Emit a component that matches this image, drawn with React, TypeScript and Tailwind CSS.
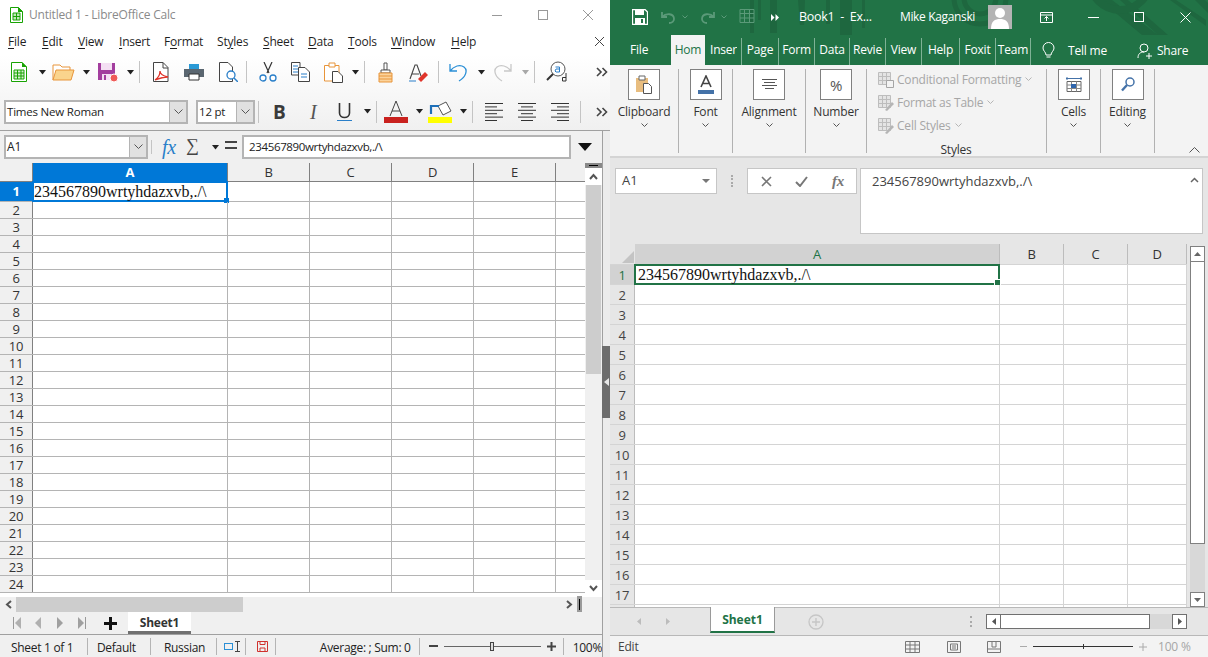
import React from "react";

const Dd = ({ c = "bg-[#222]", ml = "" }: { c?: string; ml?: string }) => (
  <svg width="7" height="5" viewBox="0 0 7 5" className={ml}><path d="M0 0h7L3.5 4.5z" fill={c === "dim" ? "#a8a8a8" : "#222"} /></svg>
);
const Sep = ({ ml }: { ml: string }) => <div className={`w-px h-[22px] bg-[#c4c4c4] ${ml}`} />;
const More = ({ ml }: { ml: string }) => (
  <svg width="12" height="10" viewBox="0 0 12 10" className={ml}><path d="M1 1l4 4-4 4M6.500 1l4 4-4 4" fill="none" stroke="#444" strokeWidth="1.600" /></svg>
);
const U = ({ children }: { children: React.ReactNode }) => <span className="underline underline-offset-2 decoration-1">{children}</span>;

const leftMenu: [React.ReactNode, string][] = [
  [<><U>F</U>ile</>, "w-[34px]"],
  [<><U>E</U>dit</>, "w-[36px]"],
  [<><U>V</U>iew</>, "w-[41px]"],
  [<><U>I</U>nsert</>, "w-[45px]"],
  [<>F<U>o</U>rmat</>, "w-[53px]"],
  [<>St<U>y</U>les</>, "w-[46px]"],
  [<><U>S</U>heet</>, "w-[45px]"],
  [<><U>D</U>ata</>, "w-[40px]"],
  [<><U>T</U>ools</>, "w-[43px]"],
  [<><U>W</U>indow</>, "w-[60px]"],
  [<><U>H</U>elp</>, "w-[40px]"],
];

function AlignIcon({ kind, ml }: { kind: "l" | "c" | "r"; ml: string }) {
  const rows = [18, 12, 18, 12, 18, 12];
  return (
    <svg width="18" height="20" viewBox="0 0 18 20" className={ml}>
      {rows.map((w, i) => {
        const x = kind === "l" ? 0 : kind === "r" ? 18 - w : (18 - w) / 2;
        return <rect key={i} x={x} y={1 + i * 3.4} width={w} height="1" fill="#333" />;
      })}
    </svg>
  );
}

function Toolbar1() {
  return (
    <div className="flex items-center h-[28px] mt-[3px] pl-[11px]">
      <svg width="16" height="20" viewBox="0 0 16 20"><path d="M.5 .5H11L15.500 5V19.500H.5z" fill="#fff" stroke="#18a303" /><path d="M11 0v5h5z" fill="#18a303" /><path d="M3 8h10v9H3z" fill="#d6efd0" stroke="#18a303" /><path d="M3 11h10M3 14h10M6.500 8v9M10 8v9" stroke="#18a303" /></svg>
      <Dd ml="ml-[12px]" />
      <svg width="23" height="18" viewBox="0 0 23 18" className="ml-[6px]"><path d="M1 17V2h7l2 2h8v3" fill="#fff" stroke="#e8953a" /><path d="M1 17L4 7h18l-3 10z" fill="#fad48d" stroke="#e8953a" /></svg>
      <Dd ml="ml-[8px]" />
      <svg width="21" height="20" viewBox="0 0 21 20" className="ml-[7px]"><path d="M1 1h17v17H1z" fill="#a33e9e" /><path d="M4 1h11v7H4z" fill="#f4dff3" /><path d="M5 12h9v6H5z" fill="#f4dff3" /><path d="M7 13h2v5H7z" fill="#a33e9e" /><circle cx="17" cy="16" r="4" fill="#ef5b58" stroke="#fff" /></svg>
      <Dd ml="ml-[9px]" />
      <Sep ml="ml-[5px]" />
      <svg width="16" height="20" viewBox="0 0 16 20" className="ml-[13px]"><path d="M.5 .5H10L15 5.500V19.500H.5z" fill="#fff" stroke="#444" /><path d="M10 .5V6h5" fill="none" stroke="#444" /><path d="M2 18c3-2 5-6 5-9 0 3 3 5 8 6-4 0-8 1-13 3z" fill="none" stroke="#e0352b" strokeWidth="1.300" /></svg>
      <svg width="20" height="18" viewBox="0 0 20 18" className="ml-[15px]"><path d="M5 1h10v5H5z" fill="#2a9ad6" /><path d="M0 6h20v8H0z" fill="#5a6670" /><path d="M5 11h10v6H5z" fill="#fff" stroke="#333" /></svg>
      <svg width="19" height="20" viewBox="0 0 19 20" className="ml-[15px]"><path d="M.5 .5H9L13.500 5V19.500H.5z" fill="#fff" stroke="#444" /><circle cx="12" cy="13" r="4" fill="#fff" stroke="#2a7fc9" strokeWidth="1.300" /><path d="M15 16l4 4" stroke="#2a7fc9" strokeWidth="1.500" /></svg>
      <Sep ml="ml-[8px]" />
      <svg width="18" height="20" viewBox="0 0 18 20" className="ml-[12px]"><path d="M5 0l5 11M13 0L8 11" stroke="#333" strokeWidth="1.200" /><circle cx="4" cy="16" r="3" fill="#fff" stroke="#2a7fc9" strokeWidth="1.300" /><circle cx="14" cy="16" r="3" fill="#fff" stroke="#2a7fc9" strokeWidth="1.300" /></svg>
      <svg width="19" height="20" viewBox="0 0 19 20" className="ml-[14px]"><path d="M.5 .5H9V13H.5z" fill="#fff" stroke="#444" /><path d="M2 4h5M2 7h5M2 10h5" stroke="#2a7fc9" /><path d="M7.500 5.500H14L18.500 10V19.500H7.500z" fill="#fff" stroke="#444" /><path d="M10 12h6M10 15h6" stroke="#2a7fc9" /></svg>
      <svg width="19" height="21" viewBox="0 0 19 21" className="ml-[14px]"><path d="M.5 3.500H15V19H.5z" fill="#fff" stroke="#e8953a" /><path d="M5 1h6v4H5z" fill="#fff" stroke="#e8953a" /><path d="M8.500 9.500H14L18.500 14V20.500H8.500z" fill="#fff" stroke="#444" /></svg>
      <Dd ml="ml-[9px]" />
      <Sep ml="ml-[5px]" />
      <svg width="15" height="21" viewBox="0 0 15 21" className="ml-[13px]"><path d="M6 1h3v7H6z" fill="#fff" stroke="#555" /><path d="M3 8h9v3H3z" fill="#fff" stroke="#555" /><path d="M1 11h13v9H1z" fill="#fbd39c" stroke="#e8953a" /><path d="M1 14h13M1 17h13" stroke="#e8953a" /></svg>
      <svg width="19" height="21" viewBox="0 0 19 21" className="ml-[16px]"><path d="M1 17L6 3h2l4 11M3 12h7" fill="none" stroke="#444" strokeWidth="1.100" /><path d="M0 19h7" stroke="#2a7fc9" /><path d="M9 17l7-7 3 3-7 7z" fill="#e0352b" /></svg>
      <Sep ml="ml-[10px]" />
      <svg width="18" height="19" viewBox="0 0 18 19" className="ml-[10px]"><path d="M1 1v7h7M1 8c4-5 10-7 14-4 4 3 2 10-5 14" fill="none" stroke="#2a8fd6" strokeWidth="1.300" /></svg>
      <Dd ml="ml-[11px]" />
      <svg width="19" height="19" viewBox="0 0 19 19" className="ml-[8px]"><path d="M18 1v7h-7M18 8c-4-5-10-7-14-4-4 3-2 10 5 14" fill="none" stroke="#c8c8c8" strokeWidth="1.300" /></svg>
      <Dd c="dim" ml="ml-[10px]" />
      <Sep ml="ml-[5px]" />
      <svg width="22" height="22" viewBox="0 0 22 22" className="ml-[11px]"><circle cx="12" cy="8" r="7" fill="#fff" stroke="#555" /><path d="M7 13l-6 6" stroke="#333" strokeWidth="2" /><path d="M9.500 6h4v5h-3.500l-1-1 1-2h3.500" fill="none" stroke="#2a7fc9" /><path d="M20 12v8h-3.500v-3.500H20" fill="none" stroke="#333" /></svg>
      <More ml="ml-[28px]" />
    </div>
  );
}

function Combo({ label, w, arrow }: { label: string; w: string; arrow: string }) {
  return (
    <div className={`flex h-[24px] border-2 border-[#b4b4b4] bg-white ${w}`}>
      <span className="flex-1 pl-[1px] text-[11.5px] leading-[20px] text-[#222] truncate">{label}</span>
      <span className={`flex items-center justify-center bg-[#e1e1e1] border-l border-[#b4b4b4] ${arrow}`}>
        <svg width="9" height="6" viewBox="0 0 9 6"><path d="M.5 .5l4 4 4-4" fill="none" stroke="#555" /></svg>
      </span>
    </div>
  );
}

function Toolbar2() {
  return (
    <div className="flex items-center h-[27px] mt-[12px] pl-[4px]">
      <Combo label="Times New Roman" w="w-[184px]" arrow="w-[17px]" />
      <div className="ml-[8px]"><Combo label="12 pt" w="w-[59px]" arrow="w-[17px]" /></div>
      <Sep ml="ml-[3px]" />
      <span className="ml-[14px] w-[12px] text-[19px] leading-[24px] font-bold text-[#3a3a3a]">B</span>
      <span className="ml-[25px] w-[7px] text-[20px] leading-[24px] italic text-[#555] font-['Liberation_Serif',serif]">I</span>
      <div className="ml-[20px] w-[15px] h-[20px] flex flex-col items-center">
        <svg width="15" height="20" viewBox="0 0 15 20"><path d="M2.500 1v10c0 6 10 6 10 0V1" fill="none" stroke="#333" strokeWidth="1.600" /><path d="M0 18.500h15" stroke="#2a7fc9" /></svg>
      </div>
      <Dd ml="ml-[12px]" />
      <Sep ml="ml-[5px]" />
      <svg width="24" height="23" viewBox="0 0 24 23" className="ml-[7px]"><path d="M6 16L12 1l6 15M8 11h8" fill="none" stroke="#444" /><rect y="17" width="24" height="6" fill="#c9211e" /></svg>
      <Dd ml="ml-[8px]" />
      <svg width="24" height="23" viewBox="0 0 24 23" className="ml-[5px]"><path d="M10 6l8-4 5 9-8 4z" fill="#fff" stroke="#555" /><path d="M3 14V6h8" fill="none" stroke="#1e6fb8" strokeWidth="2.200" /><rect y="17" width="24" height="6" fill="#ffff00" /></svg>
      <Dd ml="ml-[8px]" />
      <Sep ml="ml-[5px]" />
      <AlignIcon kind="l" ml="ml-[12px]" />
      <AlignIcon kind="c" ml="ml-[15px]" />
      <AlignIcon kind="r" ml="ml-[15px]" />
      <Sep ml="ml-[11px]" />
      <More ml="ml-[15px]" />
    </div>
  );
}

function LeftFormula() {
  return (
    <div className="flex items-center h-[32px] pl-[4px] bg-[#f0f0f0]">
      <div className="flex w-[144px] h-[24px] border-2 border-[#b4b4b4] bg-white">
        <span className="flex-1 pl-[1px] text-[12px] leading-[20px] text-[#222]">A1</span>
        <span className="flex items-center justify-center w-[17px] bg-[#e1e1e1] border-l border-[#b4b4b4]">
          <svg width="9" height="6" viewBox="0 0 9 6"><path d="M.5 .5l4 4 4-4" fill="none" stroke="#555" /></svg>
        </span>
      </div>
      <div className="w-px h-[14px] bg-[#c4c4c4] ml-[3px]" />
      <span className="ml-[10px] w-[16px] text-[20px] leading-[24px] italic text-[#2a7fc9] font-['Liberation_Serif',serif]">fx</span>
      <span className="ml-[8px] w-[13px] text-[18px] leading-[22px] text-[#444] font-['Liberation_Serif',serif] -mt-[4px]">∑</span>
      <Dd ml="ml-[13px]" />
      <svg width="12" height="9" viewBox="0 0 12 9" className="ml-[6px] -mt-[4px]"><rect width="12" height="2" fill="#444" /><rect y="6" width="12" height="2" fill="#444" /></svg>
      <div className="ml-[5px] w-[329px] h-[24px] border-2 border-[#b4b4b4] bg-white pl-[5px] text-[11.5px] tracking-[-0.35px] leading-[20px] text-[#222]">234567890wrtyhdazxvb,./\</div>
      <svg width="14" height="8" viewBox="0 0 14 8" className="ml-[7px]"><path d="M0 0h14L7 8z" fill="#111" /></svg>
    </div>
  );
}

const lcols = ["w-[195px]", "w-[82px]", "w-[82px]", "w-[82px]", "w-[82px]"];
const lnames = ["A", "B", "C", "D", "E"];

function LeftGrid() {
  return (
    <div className="w-[585px] h-[434px] bg-white overflow-hidden">
      <div className="flex h-[19px] bg-[#f0f0f0] border-b border-[#808080] text-[13px] leading-[18px] text-[#333]">
        <div className="w-[33px] border-r border-[#808080]" />
        {lnames.map((n, i) => (
          <div key={n} className={`${lcols[i]} text-center border-r border-[#808080] ${i === 0 ? "bg-[#0078d7] text-white font-bold" : ""}`}>{n}</div>
        ))}
      </div>
      {Array.from({ length: 24 }, (_, r) => (
        <div key={r} className={`flex border-b border-[#b4b4b4] ${r === 0 ? "h-[20px]" : "h-[17px]"}`}>
          <div className={`w-[33px] text-center text-[13px] leading-[16px] border-r border-[#808080] ${r === 0 ? "bg-[#0078d7] text-white font-bold leading-[19px]" : "bg-[#f0f0f0] text-[#333]"}`}>{r + 1}</div>
          {lcols.map((w, i) => (
            <div key={i} className={`${w} border-r border-[#b4b4b4] relative`}>
              {r === 0 && i === 0 && (
                <div className="absolute -top-px -left-px -right-px -bottom-px border-2 border-[#0078d7] font-['Liberation_Serif',serif] text-[16px] tracking-normal leading-[18px] text-[#111] whitespace-nowrap">
                  234567890wrtyhdazxvb,./\
                  <div className="absolute -right-[3px] -bottom-[3px] w-[5px] h-[5px] bg-[#0078d7]" />
                </div>
              )}
            </div>
          ))}
        </div>
      ))}
    </div>
  );
}

function LeftVScroll() {
  return (
    <div className="w-[17px] h-[434px] bg-[#f0f0f0] flex flex-col">
      <div className="h-[5px] bg-[#888] flex items-center justify-center"><div className="w-[9px] h-px bg-black" /></div>
      <div className="h-[17px] bg-white flex items-center justify-center">
        <svg width="9" height="7" viewBox="0 0 9 7"><path d="M1 6l3.500-4L8 6" fill="none" stroke="#555" strokeWidth="2" /></svg>
      </div>
      <div className="h-[189px] bg-[#cdcdcd] mx-px" />
      <div className="mt-auto h-[17px] bg-white flex items-center justify-center">
        <svg width="9" height="7" viewBox="0 0 9 7"><path d="M1 1l3.500 4L8 1" fill="none" stroke="#555" strokeWidth="2" /></svg>
      </div>
    </div>
  );
}

function LeftHScroll() {
  return (
    <div className="flex items-center h-[15px] bg-[#f0f0f0]">
      <div className="w-[16px] flex justify-center">
        <svg width="7" height="9" viewBox="0 0 7 9"><path d="M6 1L2 4.500 6 8" fill="none" stroke="#555" strokeWidth="2" /></svg>
      </div>
      <div className="w-[227px] h-[15px] bg-[#cdcdcd]" />
      <svg width="7" height="9" viewBox="0 0 7 9" className="ml-[323px]"><path d="M1 1l4 3.500L1 8" fill="none" stroke="#555" strokeWidth="2" /></svg>
      <div className="ml-[4px] w-[5px] h-[17px] bg-[#9a9a9a] flex items-center justify-center"><div className="w-px h-[11px] bg-black" /></div>
    </div>
  );
}

function LeftTabs() {
  return (
    <div className="flex items-center h-[23px] bg-[#f0f0f0] border-b border-[#a0a0a0] pl-[13px]">
      <svg width="8" height="12" viewBox="0 0 8 12"><rect width="1" height="12" fill="#999" /><path d="M8 0v12L2 6z" fill="#b0b0b0" /></svg>
      <svg width="6" height="12" viewBox="0 0 6 12" className="ml-[14px]"><path d="M6 0v12L0 6z" fill="#b0b0b0" /></svg>
      <svg width="6" height="12" viewBox="0 0 6 12" className="ml-[16px]"><path d="M0 0v12l6-6z" fill="#a0a0a0" /></svg>
      <svg width="8" height="12" viewBox="0 0 8 12" className="ml-[15px]"><path d="M0 0v12l6-6z" fill="#a0a0a0" /><rect x="7" width="1" height="12" fill="#999" /></svg>
      <svg width="13" height="13" viewBox="0 0 13 13" className="ml-[18px]"><rect y="5" width="13" height="3" fill="#111" /><rect x="5" width="3" height="13" fill="#111" /></svg>
      <div className="ml-[11px] w-[63px] h-[22px] bg-white border-b-[3px] border-[#707070] text-center text-[12px] leading-[21px] font-bold text-[#333]">Sheet1</div>
    </div>
  );
}

function LeftStatus() {
  const cell = "h-[17px] border-r border-[#b4b4b4] text-[12px] leading-[19px] tracking-[-0.3px] text-[#222]";
  return (
    <div className="flex items-center h-[22px] bg-[#f0f0f0]">
      <div className={`${cell} w-[88px] pl-[11px]`}>Sheet 1 of 1</div>
      <div className={`${cell} w-[63px] pl-[9px]`}>Default</div>
      <div className={`${cell} w-[66px] pl-[13px]`}>Russian</div>
      <div className={`${cell} w-[29px] flex items-center pl-[7px]`}>
        <svg width="17" height="11" viewBox="0 0 17 11"><rect x=".5" y="2.500" width="8" height="6" fill="none" stroke="#2a8fd6" /><path d="M11 .5h5M13.500 .5v10M11 10.500h5" stroke="#444" fill="none" /></svg>
      </div>
      <div className={`${cell} w-[30px] flex items-center pl-[11px]`}>
        <svg width="11" height="11" viewBox="0 0 11 11"><path d="M.5 .5h10v10H.5z" fill="none" stroke="#d0312d" /><path d="M3 .5h5v3H3zM3 10.500V7h5v3.500" fill="none" stroke="#d0312d" /></svg>
      </div>
      <div className={`${cell} w-[144px] pl-[44px]`}>Average: ; Sum: 0</div>
      <div className={`${cell} w-[144px] flex items-center pl-[9px]`}>
        <div className="w-[9px] h-[2px] bg-[#444]" />
        <div className="relative ml-[6px] w-[97px] h-px bg-[#666]">
          <div className="absolute left-[46px] -top-[4px] w-[4px] h-[9px] bg-[#ddd] border border-[#444]" />
        </div>
        <svg width="9" height="9" viewBox="0 0 9 9" className="ml-[6px]"><path d="M0 4.500h9M4.500 0v9" stroke="#444" strokeWidth="2" /></svg>
      </div>
      <div className="pl-[9px] text-[12px] leading-[19px] h-[17px] tracking-[-0.3px] text-[#222]">100%</div>
    </div>
  );
}

function LibreOffice() {
  return (
    <div className="w-[610px] h-[657px] flex flex-col bg-white">
      <div className="flex items-center h-[30px] pl-[10px]">
        <svg width="13" height="16" viewBox="0 0 13 16"><path d="M.5 .5H8.500L12.500 4.500V15.500H.5z" fill="#fff" stroke="#18a303" /><path d="M8 0v5h5z" fill="#18a303" /><path d="M3 6h7v7H3z" fill="#bfe8b8" stroke="#18a303" /><path d="M3 9.500h7M6.500 6v7" stroke="#18a303" /></svg>
        <span className="ml-[6px] text-[12px] text-[#8a8a8a]">Untitled 1 - LibreOffice Calc</span>
        <div className="ml-auto flex items-center">
          <div className="w-[10px] h-px bg-[#999]" />
          <div className="ml-[36px] w-[10px] h-[10px] border border-[#999]" />
          <svg width="10" height="10" viewBox="0 0 10 10" className="ml-[35px] mr-[17px]"><path d="M0 0l10 10M10 0L0 10" stroke="#999" /></svg>
        </div>
      </div>
      <div className="flex items-center h-[23px] mb-[2px] pl-[8px] text-[12px] text-[#1f1f1f]">
        {leftMenu.map(([t, w], i) => <div key={i} className={w}>{t}</div>)}
        <svg width="9" height="9" viewBox="0 0 9 9" className="ml-auto mr-[6px]"><path d="M0 0l9 9M9 0L0 9" stroke="#444" /></svg>
      </div>
      <div className="bg-gradient-to-b from-white to-[#f0f0f0] h-[75px] border-b border-[#a0a0a0] box-content">
        <Toolbar1 />
        <Toolbar2 />
      </div>
      <div className="flex flex-1 min-h-0">
        <div className="w-[602px] flex flex-col">
          <LeftFormula />
          <div className="flex"><LeftGrid /><LeftVScroll /></div>
          <LeftHScroll />
          <LeftTabs />
          <LeftStatus />
        </div>
        <div className="w-[8px] bg-[#ececec] border-l border-[#a0a0a0]">
          <div className="mt-[215px] -ml-px h-[72px] bg-[#6d6d6d] flex items-center justify-center">
            <svg width="5" height="8" viewBox="0 0 5 8"><path d="M5 0v8L0 4z" fill="#e8e8e8" /></svg>
          </div>
        </div>
      </div>
    </div>
  );
}

const xlTabs: [string, string][] = [
  ["Page", "w-[37px]"], ["Form", "w-[36px]"], ["Data", "w-[35px]"], ["Revie", "w-[36px]"], ["View", "w-[36px]"], ["Help", "w-[38px]"], ["Foxit", "w-[36px]"], ["Team", "w-[35px]"],
];

function RibbonBtn({ children }: { children: React.ReactNode }) {
  return <div className="w-[32px] h-[31px] bg-white border border-[#808080] flex items-center justify-center">{children}</div>;
}
const Chev = ({ c = "#555" }: { c?: string }) => (
  <svg width="7" height="5" viewBox="0 0 7 5"><path d="M.5 .5l3 3 3-3" fill="none" stroke={c} /></svg>
);

function Group({ w, label, children }: { w: string; label: string; children: React.ReactNode }) {
  return (
    <div className={`${w} h-[84px] mt-[4px] border-r border-[#b1b1b1] flex flex-col items-center`}>
      <RibbonBtn>{children}</RibbonBtn>
      <div className="mt-[4px] text-[12px] leading-[16px] text-[#333]">{label}</div>
      <div className="mt-[3px]"><Chev /></div>
    </div>
  );
}

function StyleRow({ label, kind }: { label: string; kind: number }) {
  return (
    <div className="flex items-center h-[23px]">
      <svg width="16" height="16" viewBox="0 0 16 16">
        <path d="M.5 .5h12v12H.5z" fill="#e4e4e4" stroke="#bdbdbd" />
        <path d="M4.500 .5v12M8.500 .5v12M.5 4.500h12M.5 8.500h12" stroke="#bdbdbd" />
        {kind === 0 ? <path d="M8.500 8.500h7v7h-7z" fill="#f3f3f3" stroke="#a5a5a5" /> : <path d="M7 15l7-8 2 2-7 7z" fill="#b5b5b5" />}
      </svg>
      <span className="ml-[3px] text-[12px] text-[#a6a6a6] whitespace-nowrap">{label}</span>
      <span className="ml-[4px]"><Chev c="#b5b5b5" /></span>
    </div>
  );
}

function Ribbon() {
  return (
    <div className="flex h-[93px] bg-[#f3f3f3] border-b-2 border-[#d4d4d4]">
      <Group w="w-[69px]" label="Clipboard">
        <svg width="16" height="19" viewBox="0 0 16 19"><path d="M0 3h12v14H0z" fill="#e8bd7f" /><path d="M3 1h6v4H3z" fill="#fff" stroke="#666" /><path d="M7.500 8.500h5l3 3v7h-8z" fill="#fff" stroke="#555" /></svg>
      </Group>
      <Group w="w-[54px]" label="Font">
        <svg width="16" height="19" viewBox="0 0 16 19"><path d="M3 12L8 1l5 11M5 8.500h6" fill="none" stroke="#444" strokeWidth="1.600" /><rect y="15" width="16" height="4" fill="#4472a8" /></svg>
      </Group>
      <Group w="w-[73px]" label="Alignment">
        <svg width="15" height="11" viewBox="0 0 15 11"><path d="M0 .5h15M2 3.500h11M0 6.500h15M3 9.500h9" stroke="#555" /></svg>
      </Group>
      <Group w="w-[61px]" label="Number">
        <span className="text-[15px] leading-[18px] text-[#555]">%</span>
      </Group>
      <div className="w-[180px] h-[84px] mt-[4px] border-r border-[#b1b1b1] flex flex-col pl-[11px]">
        <div className="-mt-px">
          <StyleRow label="Conditional Formatting" kind={0} />
          <StyleRow label="Format as Table" kind={1} />
          <StyleRow label="Cell Styles" kind={1} />
        </div>
        <div className="mt-[5px] pr-[12px] text-center text-[12px] leading-[16px] text-[#333]">Styles</div>
      </div>
      <Group w="w-[54px]" label="Cells">
        <svg width="16" height="16" viewBox="0 0 16 16"><path d="M0 1.500h16M1 0v3M15 0v3" stroke="#4472a8" /><path d="M1 4.500h14v10H1z" fill="#fff" stroke="#666" /><path d="M5.500 4.500v10M10.500 4.500v10M1 8h14M1 11.500h14" stroke="#888" /><rect x="5" y="7" width="5" height="4" fill="#2f65ac" /></svg>
      </Group>
      <Group w="w-[54px]" label="Editing">
        <svg width="14" height="15" viewBox="0 0 14 15"><circle cx="9" cy="5" r="4" fill="#fff" stroke="#4472a8" strokeWidth="1.500" /><path d="M6 8l-5 5.500" stroke="#4472a8" strokeWidth="2.400" /></svg>
      </Group>
      <div className="flex-1 flex items-end justify-end pr-[8px] pb-[3px]">
        <svg width="11" height="6" viewBox="0 0 11 6"><path d="M.5 5.500l5-5 5 5" fill="none" stroke="#555" /></svg>
      </div>
    </div>
  );
}

function XlFormula() {
  return (
    <div className="flex h-[86px] bg-[#e6e6e6] pt-[10px] pl-[5px]">
      <div className="flex items-center w-[102px] h-[26px] bg-white border border-[#c6c6c6] pl-[6px] text-[13px] tracking-normal text-[#444]">
        A1
        <svg width="8" height="5" viewBox="0 0 8 5" className="ml-auto mr-[6px]"><path d="M0 0h8L4 4z" fill="#777" /></svg>
      </div>
      <div className="ml-[14px] w-[2px] h-[12px] mt-[7px] border-l-2 border-dotted border-[#aaa]" />
      <div className="ml-[14px] flex items-center w-[110px] h-[26px] bg-white border border-[#c6c6c6]">
        <svg width="11" height="11" viewBox="0 0 11 11" className="ml-[13px]"><path d="M1 1l9 9M10 1l-9 9" stroke="#777" strokeWidth="1.600" /></svg>
        <svg width="13" height="11" viewBox="0 0 13 11" className="ml-[23px]"><path d="M1 6l4 4 7-9" fill="none" stroke="#777" strokeWidth="2" /></svg>
        <span className="ml-[24px] text-[15px] font-bold italic font-['Liberation_Serif',serif] text-[#777]">fx</span>
      </div>
      <div className="ml-[3px] w-[343px] h-[66px] bg-white border border-[#c6c6c6] pl-[11px] pt-[3px] text-[13px] tracking-normal leading-[19px] text-[#444] flex justify-between">
        234567890wrtyhdazxvb,./\
        <svg width="9" height="6" viewBox="0 0 9 6" className="mt-[5px] mr-[3px]"><path d="M1 5l3.500-3.500L8 5" fill="none" stroke="#666" strokeWidth="1.500" /></svg>
      </div>
    </div>
  );
}

const xcols = ["w-[365px]", "w-[64px]", "w-[64px]", "w-[59px]"];
const xnames = ["A", "B", "C", "D"];

function XlGrid() {
  return (
    <div className="w-[577px] h-[363px] bg-white overflow-hidden">
      <div className="flex h-[20px] bg-[#e6e6e6] text-[13px] leading-[20px] text-[#333]">
        <div className="w-[25px] flex items-end justify-end pr-[1px] pb-[1px]">
          <svg width="12" height="12" viewBox="0 0 12 12"><path d="M12 0v12H0z" fill="#c4c4c4" /></svg>
        </div>
        {xnames.map((n, i) => (
          <div key={n} className={`${xcols[i]} text-center border-r border-[#bcbcbc] ${i === 0 ? "bg-[#d2d2d2] text-[#217346]" : ""}`}>{n}</div>
        ))}
      </div>
      {Array.from({ length: 18 }, (_, r) => (
        <div key={r} className={`flex border-b border-[#d4d4d4] ${r === 0 ? "h-[21px] border-t" : "h-[20px]"}`}>
          <div className={`w-[25px] text-center text-[13px] leading-[21px] border-r border-[#bcbcbc] ${r === 0 ? "bg-[#d2d2d2] text-[#217346]" : "bg-[#e6e6e6] text-[#444]"}`}>{r < 17 ? r + 1 : ""}</div>
          {xcols.map((w, i) => (
            <div key={i} className={`${w} border-r border-[#d4d4d4] relative`}>
              {r === 0 && i === 0 && (
                <div className="absolute -top-px -left-px right-[-1px] -bottom-px border-2 border-[#217346] pl-[2px] font-['Liberation_Serif',serif] text-[16px] tracking-normal leading-[18px] text-[#111] whitespace-nowrap">
                  234567890wrtyhdazxvb,./\
                  <div className="absolute -right-[3px] -bottom-[3px] w-[5px] h-[5px] bg-[#217346] border border-white box-content" />
                </div>
              )}
            </div>
          ))}
        </div>
      ))}
    </div>
  );
}

function XlVScroll() {
  return (
    <div className="w-[15px] ml-[3px] h-[361px] mt-[2px] bg-[#d8d8d8] flex flex-col">
      <div className="h-[16px] bg-white border border-[#808080] flex items-center justify-center">
        <svg width="7" height="4" viewBox="0 0 7 4"><path d="M3.500 0L7 4H0z" fill="#666" /></svg>
      </div>
      <div className="h-[282px] bg-white border border-t-0 border-[#808080]" />
      <div className="mt-auto h-[15px] bg-white border border-[#808080] flex items-center justify-center">
        <svg width="7" height="4" viewBox="0 0 7 4"><path d="M0 0h7L3.500 4z" fill="#666" /></svg>
      </div>
    </div>
  );
}

function XlTabs() {
  return (
    <div className="flex items-center h-[29px] bg-[#e6e6e6] border-t border-b border-[#b8b8b8] pl-[27px]">
      <svg width="4" height="7" viewBox="0 0 4 7"><path d="M4 0v7L0 3.500z" fill="#bcbcbc" /></svg>
      <svg width="4" height="7" viewBox="0 0 4 7" className="ml-[25px]"><path d="M0 0v7l4-3.500z" fill="#bcbcbc" /></svg>
      <div className="ml-[40px] w-[65px] h-[26px] -mt-px self-start bg-white border-x border-b-[2px] border-[#9a9a9a] border-b-[#217346] text-center text-[12px] tracking-normal font-bold leading-[25px] text-[#217346]">Sheet1</div>
      <svg width="16" height="16" viewBox="0 0 16 16" className="ml-[33px]"><circle cx="8" cy="8" r="7" fill="none" stroke="#c6c6c6" strokeWidth="1.300" /><path d="M4 8h8M8 4v8" stroke="#c6c6c6" strokeWidth="1.400" /></svg>
      <div className="ml-[146px] w-[2px] h-[11px] border-l-2 border-dotted border-[#aaa]" />
      <div className="ml-[14px] flex w-[201px] h-[15px] bg-[#d8d8d8]">
        <div className="w-[15px] bg-white border border-[#707070] flex items-center justify-center">
          <svg width="4" height="7" viewBox="0 0 4 7"><path d="M4 0v7L0 3.500z" fill="#555" /></svg>
        </div>
        <div className="w-[149px] bg-white border-y border-r border-[#707070]" />
        <div className="ml-auto w-[15px] bg-white border border-[#707070] flex items-center justify-center">
          <svg width="4" height="7" viewBox="0 0 4 7"><path d="M0 0v7l4-3.500z" fill="#555" /></svg>
        </div>
      </div>
    </div>
  );
}

function XlStatus() {
  return (
    <div className="flex items-center h-[21px] bg-[#f3f3f3] pl-[8px] text-[12px] text-[#444]">
      <span className="w-[23px]">Edit</span>
      <svg width="15" height="12" viewBox="0 0 15 12" className="ml-[264px]"><path d="M.5 .5h14v11H.5zM5 .5v11M10 .5v11M.5 4h14M.5 8h14" fill="none" stroke="#777" /></svg>
      <svg width="14" height="12" viewBox="0 0 14 12" className="ml-[27px]"><path d="M.5 .5h13v11H.5z" fill="none" stroke="#777" /><path d="M3.500 3h7v6h-7zM5 5h4M5 7h4" fill="none" stroke="#777" /></svg>
      <svg width="14" height="12" viewBox="0 0 14 12" className="ml-[26px]"><path d="M.5 .5h13v11H.5zM5 .5V6h4V.5M.5 8h13" fill="none" stroke="#777" /></svg>
      <div className="ml-[19px] w-[7px] h-px bg-[#aaa]" />
      <div className="relative ml-[6px] w-[100px] h-px bg-[#333]">
        <div className="absolute left-[50px] -top-[2px] w-px h-[5px] bg-[#333]" />
      </div>
      <svg width="8" height="8" viewBox="0 0 8 8" className="ml-[6px]"><path d="M0 4h8M4 0v8" stroke="#aaa" /></svg>
      <span className="ml-[11px] text-[#a6a6a6] whitespace-nowrap">100 %</span>
    </div>
  );
}

function Excel() {
  return (
    <div className="w-[598px] h-[657px] flex flex-col bg-[#e6e6e6]">
      <div className="relative h-[65px] bg-[#217346] text-white text-[12px]">
        <svg width="598" height="65" viewBox="0 0 598 65" className="absolute inset-0 pointer-events-none">
          <g fill="#1e673f">
            <rect x="140" y="0" width="4" height="33" /><rect x="148" y="0" width="3" height="20" /><rect x="160" y="0" width="7" height="33" /><path d="M188 0h7l-1 25h-4z" /><rect x="230" y="0" width="12" height="35" /><rect x="252" y="0" width="3" height="28" /><rect x="216" y="0" width="4" height="24" />
            <path d="M490 0h12l46 35h-16zM510 0h8l40 35h-10zM560 0h6l30 20v6zM585 0h10l3 3v10z" />
          </g>
          <g fill="none" stroke="#1e673f" strokeWidth="5">
            <circle cx="370" cy="-2" r="26" /><circle cx="370" cy="-2" r="16" /><circle cx="510" cy="-20" r="30" strokeWidth="8" />
          </g>
        </svg>
        <div className="relative flex items-center h-[34px] mb-px">
          <svg width="16" height="16" viewBox="0 0 16 16" className="ml-[22px]"><path d="M.5 .5H13L15.500 3V15.500H.5z" fill="none" stroke="#fff" strokeWidth="1.300" /><rect x="3" y="1" width="9" height="5" fill="#fff" /><rect x="3" y="9" width="10" height="6" fill="#fff" /><rect x="9" y="10" width="2" height="4" fill="#217346" /></svg>
          <svg width="15" height="13" viewBox="0 0 15 13" className="ml-[13px]"><path d="M1 1v5h5M1 6c4-4 12-4 12 2 0 2-2 4-5 4" fill="none" stroke="#5b9a79" strokeWidth="1.800" /></svg>
          <svg width="6" height="4" viewBox="0 0 6 4" className="ml-[6px]"><path d="M.5 .5L3 3 5.500 .5" fill="none" stroke="#5b9a79" /></svg>
          <svg width="15" height="13" viewBox="0 0 15 13" className="ml-[12px]"><path d="M14 1v5H9M14 6c-4-4-12-4-12 2 0 2 2 4 5 4" fill="none" stroke="#5b9a79" strokeWidth="1.800" /></svg>
          <svg width="6" height="4" viewBox="0 0 6 4" className="ml-[6px]"><path d="M.5 .5L3 3 5.500 .5" fill="none" stroke="#5b9a79" /></svg>
          <svg width="16" height="16" viewBox="0 0 16 16" className="ml-[12px]"><path d="M1 .5h14v13H1zM1 4.500h14M5.500 .5v13M10.500 .5v13M1 9h14" fill="none" stroke="#5b9a79" /></svg>
          <svg width="8" height="7" viewBox="0 0 8 7" className="ml-[16px]"><path d="M0 0l3.500 3.500L0 7zM4.500 0L8 3.500 4.500 7z" fill="#fff" /></svg>
          <span className="ml-[20px] w-[101px] whitespace-pre text-[12.5px] tracking-[-0.3px]">Book1  -  Ex...</span>
          <span className="w-[77px] whitespace-nowrap text-[12px] tracking-[-0.35px]">Mike Kaganski</span>
          <div className="ml-[11px] w-[24px] h-[24px] bg-[#b4b4b4] overflow-hidden">
            <svg width="24" height="24" viewBox="0 0 24 24"><circle cx="12" cy="8" r="5" fill="#fff" /><path d="M3 24c0-8 4-10 9-10s9 2 9 10z" fill="#fff" /></svg>
          </div>
          <svg width="13" height="11" viewBox="0 0 13 11" className="ml-[28px]"><path d="M.5 .5h12v10H.5zM.5 3h12M6.500 9V4.500M4.500 6.500l2-2 2 2" fill="none" stroke="#fff" /></svg>
          <div className="ml-[35px] w-[11px] h-px bg-white" />
          <div className="ml-[35px] w-[10px] h-[10px] border border-white" />
          <svg width="11" height="11" viewBox="0 0 11 11" className="ml-[36px]"><path d="M.5 .5l10 10M10.500 .5l-10 10" stroke="#fff" /></svg>
        </div>
        <div className="relative flex items-end h-[30px]">
          <span className="w-[61px] pl-[20px] h-[30px] leading-[29px]">File</span>
          <div className="w-[34px] h-[30px] bg-[#f3f3f3] text-[#217346] text-center leading-[29px]">Hom</div>
          <div className="w-[36px] h-[27px] pl-[5px] pt-[3px] overflow-hidden"><span className="block w-[27px] overflow-hidden whitespace-nowrap">Insert</span></div>
          {xlTabs.map(([t, w]) => (
            <div key={t} className={`${w} h-[27px] border-l border-[#7fb296] text-center pt-[3px]`}>{t}</div>
          ))}
          <div className="h-[27px] border-l border-[#7fb296] pl-[11px] pb-[2px] flex items-center">
            <svg width="13" height="17" viewBox="0 0 13 17"><path d="M4 13c0-3-3-4-3-7a5.500 5.500 0 0 1 11 0c0 3-3 4-3 7zM4.500 15h4" fill="none" stroke="#fff" /></svg>
            <span className="ml-[13px]">Tell me</span>
            <svg width="15" height="16" viewBox="0 0 15 16" className="ml-[30px]"><circle cx="7" cy="5" r="4" fill="none" stroke="#fff" /><path d="M1 15c0-4 2-6 6-6M9 13h6M12 10v6" fill="none" stroke="#fff" /></svg>
            <span className="ml-[5px]">Share</span>
          </div>
        </div>
      </div>
      <Ribbon />
      <XlFormula />
      <div className="flex"><XlGrid /><XlVScroll /></div>
      <XlTabs />
      <XlStatus />
    </div>
  );
}

export default function App() {
  return (
    <div className="flex w-[1208px] h-[657px] overflow-hidden tracking-[-0.2px] font-['Open_Sans','Noto_Sans',sans-serif]">
      <LibreOffice />
      <Excel />
    </div>
  );
}
